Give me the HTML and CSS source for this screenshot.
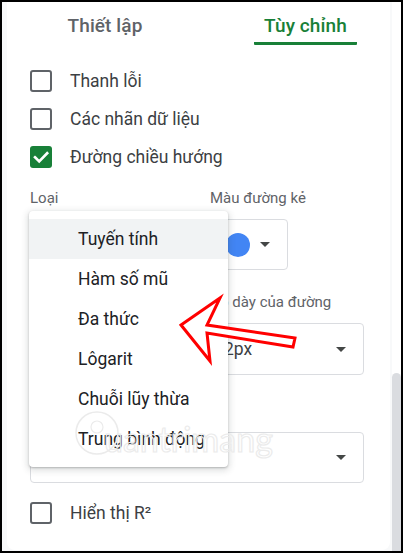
FILE: index.html
```html
<!DOCTYPE html>
<html lang="vi">
<head>
<meta charset="utf-8">
<link rel="stylesheet" href="styles.css">
</head>
<body>
<div class="frame">
  <div class="panel">
    <div class="tabs">
      <div class="tab">Thiết lập</div>
      <div class="tab active">Tùy chỉnh</div>
    </div>
    <div class="content">
      <div class="check-row"><span class="box"></span><span class="check-label">Thanh lỗi</span></div>
      <div class="check-row"><span class="box"></span><span class="check-label">Các nhãn dữ liệu</span></div>
      <div class="check-row"><span class="box checked"><svg viewBox="0 0 22 22" width="22" height="22"><path d="M5 11.3 L9.2 15.4 L17.2 7.2" fill="none" stroke="#fff" stroke-width="2.6" stroke-linecap="square"/></svg></span><span class="check-label">Đường chiều hướng</span></div>

      <div class="field-row first">
        <div class="field col1">
          <div class="label">Loại</div>
          <div class="select wide1"><span class="sel-text"></span><span class="caret"></span></div>
        </div>
        <div class="field">
          <div class="label">Màu đường kẻ</div>
          <div class="select color"><span class="dot"></span><span class="caret"></span></div>
        </div>
      </div>

      <div class="field-row second">
        <div class="field col1">
          <div class="label">&nbsp;</div>
          <div class="select wide1"><span class="sel-text"></span><span class="caret"></span></div>
        </div>
        <div class="field">
          <div class="label">Độ dày của đường</div>
          <div class="select thick"><span class="sel-text">2px</span><span class="caret"></span></div>
        </div>
      </div>

      <div class="field third">
        <div class="label">&nbsp;</div>
        <div class="select full"><span class="sel-text"></span><span class="caret"></span></div>
      </div>

      <div class="check-row last"><span class="box"></span><span class="check-label">Hiển thị R²</span></div>
    </div>

    <div class="menu">
      <div class="item selected">Tuyến tính</div>
      <div class="item">Hàm số mũ</div>
      <div class="item">Đa thức</div>
      <div class="item">Lôgarit</div>
      <div class="item">Chuỗi lũy thừa</div>
      <div class="item">Trung bình động</div>
    </div>

    <svg class="overlay" viewBox="7 2 383 549" width="383" height="549">
      <g class="watermark">
        <circle cx="97" cy="433" r="21" fill="none" stroke="#ebebeb" stroke-width="1.5"/>
        <circle cx="97" cy="427" r="6" fill="none" stroke="#ebebeb" stroke-width="1.2"/>
        <text x="104" y="452" class="wm-text">uantrimang</text>
      </g>
      <polygon points="181,325 220,298 207,325 295,338 293,347 207,333 210,361" fill="#fff" stroke="#ff0000" stroke-width="3" stroke-linejoin="miter"/>
    </svg>
  </div>
  <div class="scroll"><div class="thumb"></div></div>
</div>
</body>
</html>
```
FILE: styles.css
```css
* { box-sizing: border-box; }
html, body { margin: 0; padding: 0; background: #fff; }
body { font-family: Roboto, "Noto Sans", Arial, sans-serif; }

.frame {
  width: 403px;
  height: 553px;
  border: 2px solid #000;
  background: #f8f9fa;
  display: flex;
  overflow: hidden;
}

.panel {
  position: relative;
  margin-left: 5px;
  width: 383px;
  height: 548px;
  background: #fff;
  border-radius: 0 0 8px 8px;
  flex: none;
}

.scroll {
  width: 9px;
  margin-left: 2px;
  padding-top: 371px;
  display: flex;
  flex-direction: column;
  background: #fff;
}
.thumb {
  flex: 1;
  background: #dadce0;
  border-radius: 5px 5px 0 0;
}

/* tabs */
.tabs {
  display: flex;
  height: 43px;
}
.tab {
  width: 196px;
  text-align: center;
  padding-top: 14px;
  font-size: 19px;
  line-height: 20px;
  font-weight: 500;
  color: #5f6368;
  letter-spacing: 0.1px;
}
.tab.active {
  width: 103px;
  margin-left: 51px;
  color: #188038;
  border-bottom: 3px solid #188038;
  border-radius: 0 0 1px 1px;
}

.content {
  padding: 17px 26px 0 23px;
}

.check-row {
  display: flex;
  align-items: center;
  height: 38px;
  gap: 18px;
}
.check-row.last { margin-top: 11px; }
.box {
  width: 22px;
  height: 22px;
  border: 2px solid #5f6368;
  border-radius: 3px;
  flex: none;
  display: flex;
}
.box.checked {
  border: none;
  background: #188038;
  border-radius: 3px;
}
.check-label {
  font-size: 17.5px;
  color: #3c4043;
}

.field-row {
  display: flex;
}
.field-row.first { margin-top: 13px; }
.field-row.second { margin-top: 23px; }
.field.col1 { width: 180px; }
.field.third { margin-top: 27px; }

.label {
  font-size: 15px;
  line-height: 18px;
  color: #5f6368;
  margin-bottom: 12px;
}

.select {
  display: flex;
  align-items: center;
  border: 1px solid #dadce0;
  border-radius: 4px;
  height: 51px;
  padding: 0 17px 0 13px;
}
.select.wide1 { width: 168px; }
.select.color { width: 78px; padding-left: 15px; }
.select.thick { width: 154px; height: 52px; }
.select.full { width: 334px; }
.sel-text {
  flex: 1;
  font-size: 17.5px;
  color: #3c4043;
}
.dot {
  width: 24px;
  height: 24px;
  border-radius: 50%;
  background: #4285f4;
  flex: none;
  margin-right: auto;
}
.caret {
  width: 0;
  height: 0;
  border-left: 5px solid transparent;
  border-right: 5px solid transparent;
  border-top: 5px solid #444746;
  flex: none;
}

/* dropdown menu */
.menu {
  position: absolute;
  left: 22px;
  top: 209px;
  width: 199px;
  padding: 8px 0;
  background: #fff;
  border-radius: 4px;
  box-shadow: 0 1px 2px rgba(60, 64, 67, 0.3), 0 2px 6px 2px rgba(60, 64, 67, 0.15);
}
.item {
  height: 40px;
  line-height: 40px;
  padding-left: 49px;
  font-size: 17.5px;
  color: #202124;
}
.item.selected { background: #f1f3f4; }

.overlay {
  position: absolute;
  left: 0;
  top: 0;
  pointer-events: none;
}
.wm-text {
  font-family: Lato, "Open Sans", sans-serif;
  font-size: 34px;
  fill: none;
  stroke: #ebebeb;
  stroke-width: 1.2;
}
```
